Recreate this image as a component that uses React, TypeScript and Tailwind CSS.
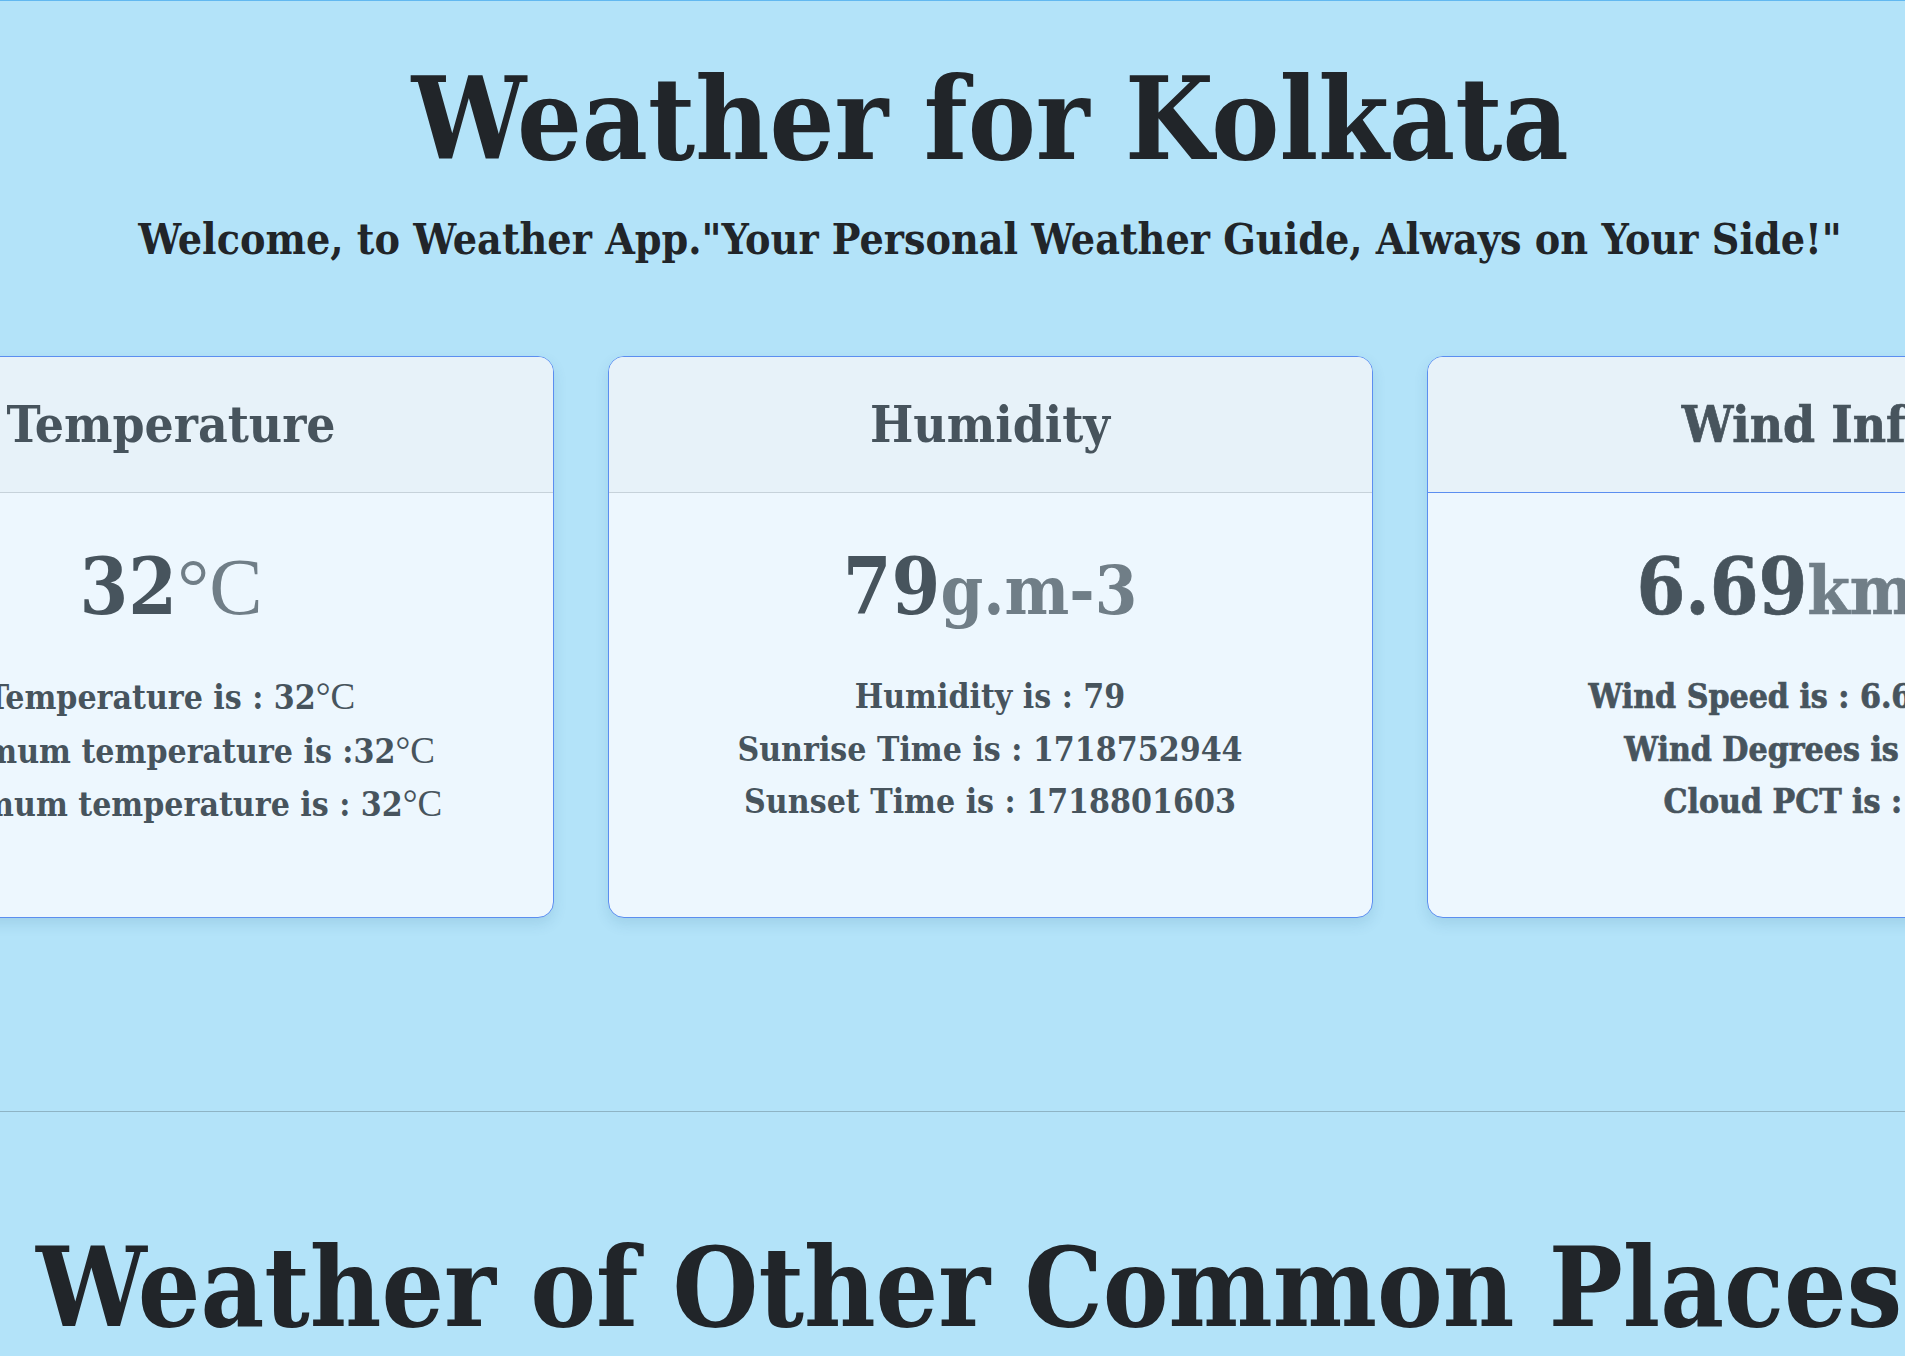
import React from "react";

const F = "font-['DejaVu_Serif','Liberation_Serif',serif] font-stretch-condensed font-bold";

function Deg({ cls = "" }: { cls?: string }) {
  return <span className={`font-['Liberation_Serif',serif] font-normal font-stretch-normal [-webkit-text-stroke:0px] ${cls}`}>°C</span>;
}

type CardProps = {
  title: string;
  value: string;
  unit: React.ReactNode;
  lines: React.ReactNode[];
  heavy?: boolean;
  blueDivider?: boolean;
};

function Card({ title, value, unit, lines, heavy, blueDivider }: CardProps) {
  return (
    <div
      className={`w-[765px] h-[562px] shrink-0 rounded-[16px] border border-[#5b8ef0] bg-[#edf7fe] overflow-hidden shadow-[0_6px_14px_rgba(20,80,120,0.12)] text-[#47545d] ${
        heavy ? "[-webkit-text-stroke:0.7px_currentColor]" : ""
      }`}
    >
      <div
        className={`h-[136px] bg-[#e7f2f9] border-b ${
          blueDivider ? "border-[#5b8ef0]" : "border-[#c6d2da]"
        } text-center text-[51px] leading-[135px] whitespace-nowrap`}
      >
        {title}
      </div>
      <div className="pt-[46px] text-center">
        <div className="text-[78px] leading-[96px] whitespace-nowrap">
          <span>{value}</span>
          <span className="text-[68px] text-[#707e87]">{unit}</span>
        </div>
        <ul className="mt-[33px] text-[33.5px] leading-[52.5px]">
          {lines.map((l, i) => (
            <li key={i} className="whitespace-nowrap">
              {l}
            </li>
          ))}
        </ul>
      </div>
    </div>
  );
}

export default function App() {
  return (
    <div className={`min-h-screen w-full overflow-hidden bg-[#b3e3f9] border-t border-[#62b8f0] ${F}`}>
      <div className="w-[1980px]">
        <h1 className="pt-[61px] text-center text-[113.5px] leading-[115px] text-[#212529] whitespace-nowrap">
          Weather for Kolkata
        </h1>
        <h3 className="mt-[41px] text-center text-[42.5px] leading-[42px] text-[#212529] whitespace-nowrap">
          Welcome, to Weather App."Your Personal Weather Guide, Always on Your Side!"
        </h3>
        <div className="mt-[96px] flex justify-center gap-[54px]">
          <Card
            title="Temperature"
            value="32"
            unit={<Deg cls="text-[80px]" />}
            lines={[
              <>Temperature is : 32<Deg cls="text-[37px]" /></>,
              <>Minimum temperature is :32<Deg cls="text-[37px]" /></>,
              <>Maximum temperature is : 32<Deg cls="text-[37px]" /></>,
            ]}
          />
          <Card
            title="Humidity"
            value="79"
            unit="g.m-3"
            lines={["Humidity is : 79", "Sunrise Time is : 1718752944", "Sunset Time is : 1718801603"]}
          />
          <Card
            title="Wind Info"
            value="6.69"
            unit="km/h"
            heavy
            blueDivider
            lines={["Wind Speed is : 6.69 km/h", "Wind Degrees is : 220", "Cloud PCT is : 40"]}
          />
        </div>
        <hr className="mt-[193px] border-0 border-t border-[#8eb4c5]" />
        <h1 className="mt-[119px] pl-[36px] text-[109.5px] leading-[113px] text-[#212529] whitespace-nowrap">
          Weather of Other Common Places
        </h1>
      </div>
    </div>
  );
}
